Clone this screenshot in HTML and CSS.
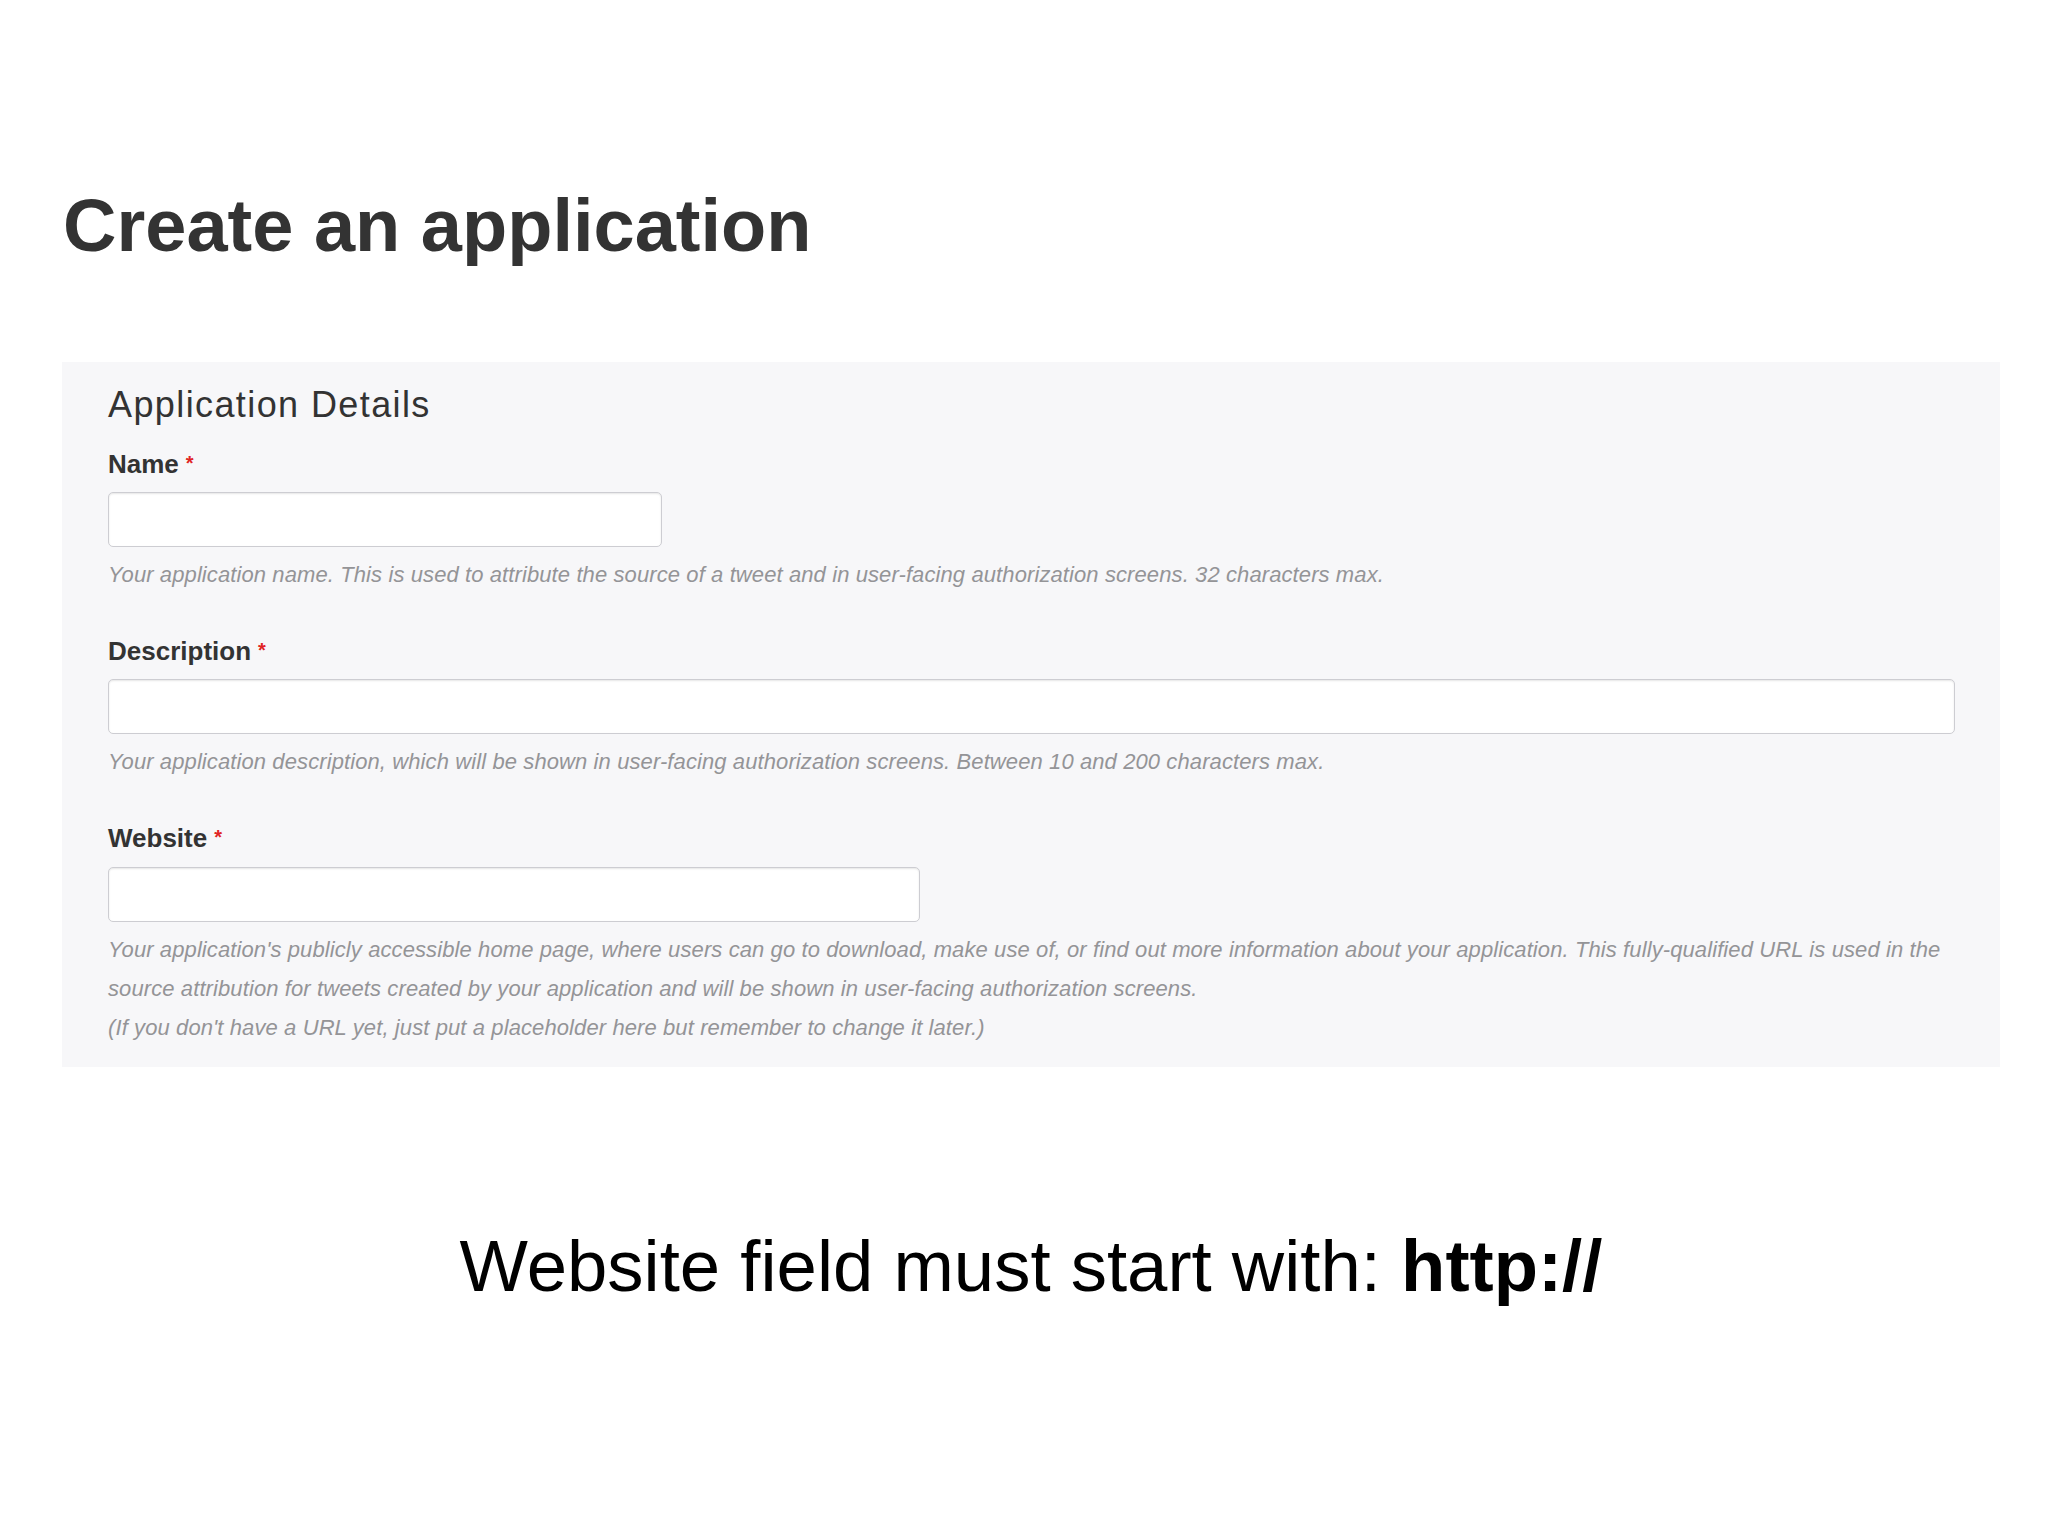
FILE: index.html
```html
<!DOCTYPE html>
<html lang="en">
<head>
  <meta charset="UTF-8" />
  <meta name="viewport" content="width=device-width, initial-scale=1" />
  <title>Create an application</title>
  <link rel="stylesheet" href="styles.css">
</head>
<body>
  <div class="page">
    <h1 class="page-title">Create an application</h1>

    <form class="details-panel">
      <h2>Application Details</h2>

      <div class="field">
        <label for="name">Name<span class="required">*</span></label>
        <input type="text" id="name" name="name" class="input-name" />
        <p class="help">Your application name. This is used to attribute the source of a tweet and in user-facing authorization screens. 32 characters max.</p>
      </div>

      <div class="field">
        <label for="description">Description<span class="required">*</span></label>
        <input type="text" id="description" name="description" class="input-wide" />
        <p class="help">Your application description, which will be shown in user-facing authorization screens. Between 10 and 200 characters max.</p>
      </div>

      <div class="field">
        <label for="website">Website<span class="required">*</span></label>
        <input type="text" id="website" name="website" class="input-website" />
        <p class="help">Your application's publicly accessible home page, where users can go to download, make use of, or find out more information about your application. This fully-qualified URL is used in the source attribution for tweets created by your application and will be shown in user-facing authorization screens.<br>(If you don't have a URL yet, just put a placeholder here but remember to change it later.)</p>
      </div>
    </form>

    <p class="note">Website field must start with: <strong>http://</strong></p>
  </div>
</body>
</html>
```

FILE: styles.css
```css
body {
  margin: 0;
  background: #ffffff;
  font-family: "Liberation Sans", Arial, sans-serif;
}
.page {
  padding: 182px 48px 0 62px;
}
.page-title {
  margin: 0;
  font-size: 74px;
  line-height: 1.2;
  font-weight: bold;
  color: #333333;
  padding-left: 1px;
}

/* grey form block */
.details-panel {
  margin-top: 91px;
  background: #f7f7f9;
  padding: 21px 45px 20px 46px;
}
.details-panel h2 {
  margin: 0 0 23px 0;
  font-size: 36px;
  line-height: 1.2;
  font-weight: normal;
  letter-spacing: 1.4px;
  color: #333333;
}
.field + .field {
  margin-top: 42px;
}
.field label {
  display: block;
  font-size: 26px;
  line-height: 1.2;
  font-weight: bold;
  color: #333333;
  margin-bottom: 12px;
}
.required {
  color: #e02424;
  font-size: 20px;
  margin-left: 7px;
  vertical-align: 3px;
}
.field input {
  display: block;
  box-sizing: border-box;
  height: 55px;
  padding: 0 12px;
  margin: 0;
  border: 1px solid #cdcdd2;
  border-radius: 5px;
  background: #ffffff;
  box-shadow: inset 0 1px 2px rgba(0, 0, 0, 0.1);
  font-size: 22px;
  outline: none;
}
.input-name {
  width: 554px;
}
.input-website {
  width: 812px;
}
.input-wide {
  width: 100%;
}
.help {
  margin: 8px 0 0 0;
  font-size: 22px;
  line-height: 39px;
  letter-spacing: 0.1px;
  font-style: italic;
  color: #949497;
}

.note {
  margin: 155px 0 0 0;
  text-align: center;
  font-size: 72.5px;
  line-height: 1.2;
  color: #000000;
}
.note strong {
  font-weight: bold;
}
```
